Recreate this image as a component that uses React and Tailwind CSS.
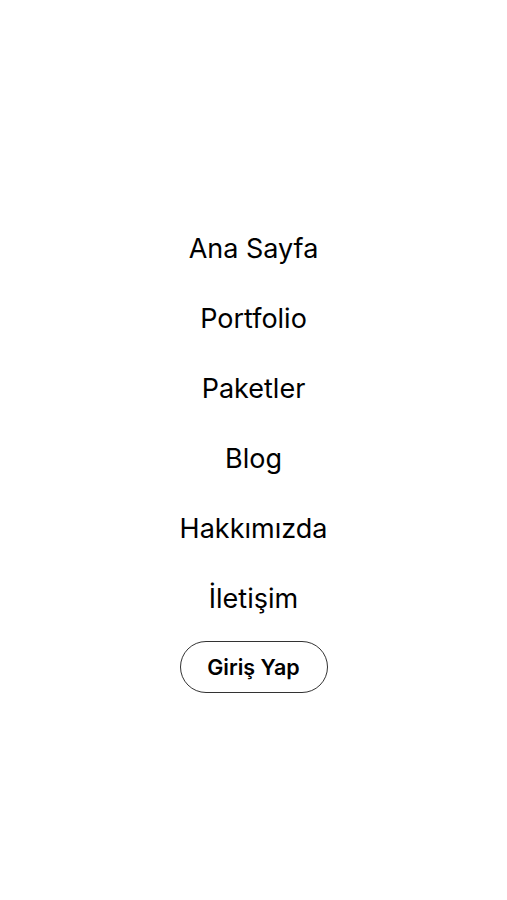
const links = ['Ana Sayfa', 'Portfolio', 'Paketler', 'Blog', 'Hakkımızda', 'İletişim'];

export default function App() {
  return (
    <div className="min-h-[900px] bg-white flex flex-col items-center pt-[213px] font-['Inter',sans-serif] text-black">
      <nav className="flex flex-col items-center">
        {links.map((link) => (
          <a key={link} href="#" className="h-[70px] flex items-center text-[27px] leading-none">
            {link}
          </a>
        ))}
      </nav>
      <button className="mt-2 w-[148px] h-[52px] rounded-full border border-[#333] text-[21.5px] font-semibold">
        Giriş Yap
      </button>
    </div>
  );
}
